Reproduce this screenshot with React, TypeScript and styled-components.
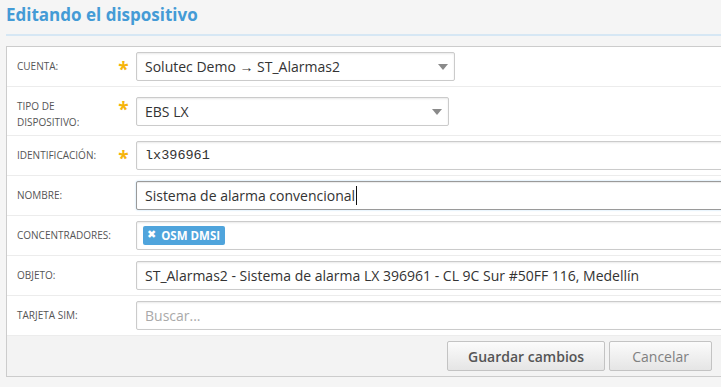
import styled, { createGlobalStyle } from 'styled-components';

const GlobalStyle = createGlobalStyle`
  html, body {
    margin: 0;
    padding: 0;
    background: #f5f5f5;
    overflow: hidden;
  }
  body {
    font-family: "Open Sans", "Liberation Sans", sans-serif;
    color: #333;
  }
`;

const Page = styled.div`
  width: 740px;
  padding-left: 6px;
  box-sizing: border-box;
`;

const Header = styled.h1`
  margin: 0 0 10px;
  padding: 4px 0 8px;
  font-size: 17px;
  line-height: 22px;
  font-weight: 700;
  color: #449bd6;
  border-bottom: 2px solid #d6e7f4;
`;

const Panel = styled.div`
  background: #fff;
  border: 1px solid #cccccc;
`;

const Row = styled.div<{ $tall?: boolean }>`
  display: grid;
  grid-template-columns: 101px 18px 1fr;
  align-items: ${(p) => (p.$tall ? 'center' : 'start')};
  padding: 5px 10px 5px 10px;
  border-bottom: 1px solid #ececec;
`;

const Label = styled.div`
  padding: 6px 0 0;
  font-size: 10px;
  line-height: 16px;
  color: #555;
  text-transform: uppercase;
`;

const Star = styled.div`
  align-self: start;
  padding-top: 7px;
  font-size: 19px;
  line-height: 20px;
  font-weight: 700;
  color: #f6b40c;
  text-align: center;
  margin-left: -7px;
`;

const Field = styled.div<{ $width?: number; $focus?: boolean; $mono?: boolean; $placeholder?: boolean }>`
  position: relative;
  box-sizing: border-box;
  width: ${(p) => (p.$width ? `${p.$width}px` : '100%')};
  height: 29px;
  padding: 0 8px;
  border: 1px solid ${(p) => (p.$focus ? '#9a9a9a' : '#cbcbcb')};
  border-radius: 2px;
  background: #fff;
  box-shadow: ${(p) =>
    p.$focus
      ? 'inset 0 1px 1px rgba(0,0,0,0.08), 0 0 2px rgba(82,168,236,0.45)'
      : 'inset 0 1px 2px rgba(0,0,0,0.09)'};
  font-family: ${(p) => (p.$mono ? '"Liberation Mono", "Courier New", monospace' : '"Open Sans", "Liberation Sans", sans-serif')};
  font-size: ${(p) => (p.$mono ? '13.5px' : '14px')};
  line-height: 27px;
  color: ${(p) => (p.$placeholder ? '#a9a9a9' : '#333')};
  white-space: nowrap;
  overflow: hidden;
  display: flex;
  align-items: center;
`;

const Arrow = styled.span`
  position: absolute;
  right: 6px;
  top: 11px;
  width: 0;
  height: 0;
  border-left: 5px solid transparent;
  border-right: 5px solid transparent;
  border-top: 6px solid #8a8a8a;
`;

const Caret = styled.span`
  display: inline-block;
  width: 1px;
  height: 19px;
  background: #111;
  margin-left: 1px;
`;

const TagBox = styled(Field)`
  padding: 0 6px;
`;

const Tag = styled.span`
  display: inline-flex;
  align-items: center;
  gap: 5px;
  height: 19px;
  padding: 0 5px 0 4px;
  border-radius: 2px;
  background: #4fa4dc;
  color: #fff;
  font-size: 11.5px;
  font-weight: 700;
  line-height: 19px;
`;

const TagX = styled.span`
  font-family: "DejaVu Sans", sans-serif;
  font-size: 11px;
  line-height: 11px;
  margin-top: -3px;
`;

const Footer = styled.div`
  display: flex;
  justify-content: flex-end;
  gap: 4px;
  padding: 5px 27px 5px 0;
  background: #f3f3f3;
`;

const Button = styled.button<{ $primary?: boolean }>`
  height: 30px;
  padding: 0 ${(p) => (p.$primary ? '20px' : '22px')};
  border: 1px solid #c3c3c3;
  border-radius: 2px;
  background: linear-gradient(#fbfbfb, #e5e5e5);
  font-family: "Open Sans", "Liberation Sans", sans-serif;
  font-size: 14px;
  font-weight: ${(p) => (p.$primary ? 600 : 400)};
  color: ${(p) => (p.$primary ? '#555' : '#808080')};
  cursor: pointer;
`;

export default function App() {
  return (
    <>
      <GlobalStyle />
      <Page>
        <Header>Editando el dispositivo</Header>
        <Panel>
          <Row>
            <Label>Cuenta:</Label>
            <Star>*</Star>
            <Field $width={319}>
              Solutec Demo → ST_Alarmas2
              <Arrow />
            </Field>
          </Row>
          <Row $tall>
            <Label>
              Tipo de
              <br />
              dispositivo:
            </Label>
            <Star>*</Star>
            <Field $width={313}>
              EBS LX
              <Arrow />
            </Field>
          </Row>
          <Row>
            <Label>Identificación:</Label>
            <Star>*</Star>
            <Field $mono>lx396961</Field>
          </Row>
          <Row>
            <Label>Nombre:</Label>
            <span />
            <Field $focus>
              Sistema de alarma convencional
              <Caret />
            </Field>
          </Row>
          <Row>
            <Label>Concentradores:</Label>
            <span />
            <TagBox>
              <Tag>
                <TagX>✖</TagX>
                OSM DMSI
              </Tag>
            </TagBox>
          </Row>
          <Row>
            <Label>Objeto:</Label>
            <span />
            <Field>ST_Alarmas2 - Sistema de alarma LX 396961 - CL 9C Sur #50FF 116, Medellín</Field>
          </Row>
          <Row>
            <Label>Tarjeta SIM:</Label>
            <span />
            <Field $placeholder>Buscar...</Field>
          </Row>
          <Footer>
            <Button $primary>Guardar cambios</Button>
            <Button>Cancelar</Button>
          </Footer>
        </Panel>
      </Page>
    </>
  );
}
